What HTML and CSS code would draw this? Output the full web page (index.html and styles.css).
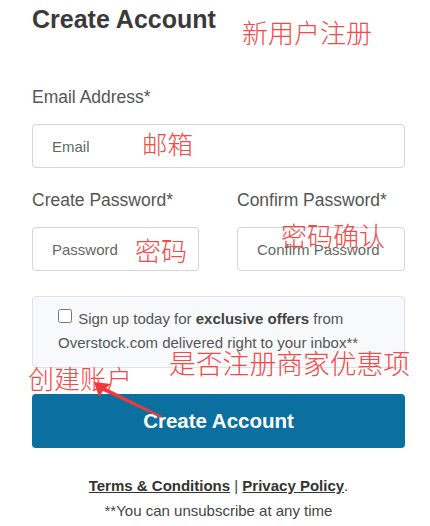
FILE: index.html
```html
<!DOCTYPE html>
<html lang="en">
<head>
    <meta charset="UTF-8">
    <meta name="viewport" content="width=device-width, initial-scale=1.0">
    <title>Create Account</title>
    <link rel="stylesheet" href="styles.css">
</head>
<body>
    <div class="signup">
        <h1>Create Account</h1>

        <div class="field">
            <label for="email">Email Address*</label>
            <input type="email" id="email" placeholder="Email">
        </div>

        <div class="field-row">
            <div class="field">
                <label for="password">Create Password*</label>
                <input type="password" id="password" placeholder="Password">
            </div>
            <div class="field">
                <label for="confirm">Confirm Password*</label>
                <input type="password" id="confirm" placeholder="Confirm Password">
            </div>
        </div>

        <div class="offers">
            <input type="checkbox" id="offers">
            <label for="offers">Sign up today for <b>exclusive offers</b> from Overstock.com delivered right to your inbox**</label>
        </div>

        <button class="btn">Create Account</button>

        <div class="legal">
            <p><a href="#">Terms &amp; Conditions</a> | <a href="#">Privacy Policy</a>.</p>
            <p>**You can unsubscribe at any time</p>
        </div>

        <!-- annotations -->
        <span class="note n-title">新用户注册</span>
        <span class="note n-email">邮箱</span>
        <span class="note n-pass">密码</span>
        <span class="note n-confirm">密码确认</span>
        <span class="note n-offers">是否注册商家优惠项</span>
        <span class="note n-create">创建账户</span>
        <svg class="arrow" width="90" height="50" viewBox="0 0 90 50">
            <polygon points="4,4 21,6 16,10 72,38 71,40 13,13 9,19" fill="#f03a3a"/>
        </svg>
    </div>
</body>
</html>
```

FILE: styles.css
```css
/* General Styles */
body {
    margin: 0;
    padding: 0;
    font-family: "Liberation Sans", Arial, sans-serif;
    background: #fff;
    color: #555;
}

.signup {
    position: relative;
    width: 373px;
    padding: 4px 0 0 32px;
}

h1 {
    margin: 0;
    font-size: 25px;
    line-height: 30px;
    color: #3a3a3a;
}

.field {
    display: flex;
    flex-direction: column;
}

.field label {
    font-size: 17.5px;
    line-height: 20px;
    color: #555;
    margin-bottom: 17px;
}

.signup > .field {
    margin-top: 53px;
}

.field input {
    box-sizing: border-box;
    height: 44px;
    padding: 0 19px;
    font-family: inherit;
    font-size: 15px;
    color: #555;
    border: 1px solid #d4d4d4;
    border-radius: 4px;
    outline: none;
}

.field input::placeholder {
    color: #666;
}

.field-row {
    display: grid;
    grid-template-columns: 167px 168px;
    column-gap: 38px;
    margin-top: 22px;
}

.offers {
    box-sizing: border-box;
    margin-top: 25px;
    height: 72px;
    padding: 10px 20px 0 25px;
    background: #f8f9fa;
    border: 1px solid #dfe1e4;
    border-radius: 4px;
    font-size: 15px;
    line-height: 24px;
    color: #555;
}

.offers input {
    width: 14px;
    height: 14px;
    margin: 0 2px 0 0;
    vertical-align: 1px;
}

.offers b {
    color: #444;
}

.btn {
    display: block;
    width: 100%;
    height: 54px;
    margin-top: 26px;
    background: #0b6f9f;
    color: #fff;
    border: none;
    border-radius: 4px;
    font-family: inherit;
    font-size: 20.5px;
    font-weight: bold;
    cursor: pointer;
}

.legal {
    margin-top: 28px;
    text-align: center;
    font-size: 15px;
    line-height: 20px;
    color: #444;
}

.legal p {
    margin: 0 0 5px;
}

.legal a {
    color: #333;
    font-weight: bold;
    text-decoration: underline;
}

/* Red screenshot notes */
.note {
    position: absolute;
    font-family: "Noto Sans CJK SC", sans-serif;
    font-size: 26px;
    line-height: 30px;
    color: #f54848;
    font-weight: 300;
    white-space: nowrap;
}

.n-title { left: 242px; top: 17px; }
.n-email { left: 142px; top: 128px; font-size: 25.5px; }
.n-pass { left: 135px; top: 235px; }
.n-confirm { left: 281px; top: 220px; }
.n-offers { left: 169px; top: 348px; font-size: 26.8px; }
.n-create { left: 28px; top: 363px; }

.arrow {
    position: absolute;
    left: 90px;
    top: 378px;
}
```
